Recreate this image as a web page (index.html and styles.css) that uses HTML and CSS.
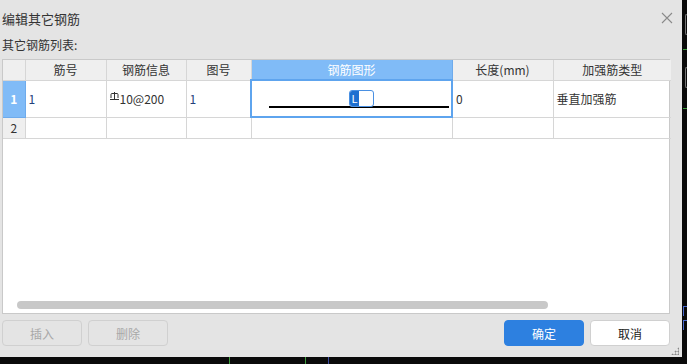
FILE: index.html
```html
<!DOCTYPE html>
<html lang="zh">
<head>
  <meta charset="utf-8" />
  <title>编辑其它钢筋</title>
  <link rel="stylesheet" href="styles.css">
</head>
<body>
  <div class="screen">
    <div class="dialog">
      <div class="title-bar">
        <span class="title">编辑其它钢筋</span>
        <span class="close">
          <svg width="12" height="12" viewBox="0 0 12 12"><path d="M1 1 L11 11 M11 1 L1 11" stroke="#8a8a8a" stroke-width="1.1" fill="none"/></svg>
        </span>
      </div>
      <div class="list-label">其它钢筋列表:</div>

      <div class="grid-box">
        <table class="grid">
          <colgroup>
            <col style="width:22px"><col style="width:81px"><col style="width:80px"><col style="width:65px">
            <col style="width:201px"><col style="width:101px"><col style="width:118px">
          </colgroup>
          <tr class="head">
            <th></th><th>筋号</th><th>钢筋信息</th><th>图号</th><th class="sel-head">钢筋图形</th><th>长度(mm)</th><th>加强筋类型</th>
          </tr>
          <tr class="row1">
            <td class="rh sel-rh">1</td>
            <td class="val">1</td>
            <td>
              <svg class="bar-sym" width="9" height="9" viewBox="0 0 9 9">
                <path d="M1 6 V2.5 Q1 1.5 2 1.5 H7 Q8 1.5 8 2.5 V6 M4.5 0 V7.5 M0 7.5 H9" stroke="#333" stroke-width="1" fill="none"/>
              </svg>10@200
            </td>
            <td class="val">1</td>
            <td class="shape-cell">
              <div class="shape">
                <div class="shape-line"></div>
                <div class="shape-box"><span class="shape-l">L</span></div>
              </div>
            </td>
            <td>0</td>
            <td>垂直加强筋</td>
          </tr>
          <tr class="row2">
            <td class="rh">2</td><td></td><td></td><td></td><td></td><td></td><td></td>
          </tr>
        </table>
        <div class="fill"></div>
        <div class="hscroll"><div class="thumb"></div></div>
      </div>

      <div class="footer">
        <button class="btn" disabled>插入</button>
        <button class="btn" disabled>删除</button>
        <div class="spacer"></div>
        <button class="btn primary">确定</button>
        <button class="btn plain">取消</button>
      </div>
      <div class="grip"></div>
    </div>
    <div class="side">
      <div class="frame f1"></div>
      <div class="frame f2"></div>
      <div class="tick t1"></div>
      <div class="tick t2"></div>
      <div class="mark m1"></div>
      <div class="mark m2"></div>
    </div>
  </div>
  <div class="bottom-strip">
    <div class="vline l1"></div>
    <div class="vline l2"></div>
    <div class="vline l3"></div>
  </div>
</body>
</html>
```

FILE: styles.css
```css
body {
  margin: 0;
  background: #0a0a0a;
  font-family: "Noto Sans CJK SC", "Liberation Sans", sans-serif;
  font-size: 12px;
  color: #333;
  width: 687px;
  height: 364px;
  overflow: hidden;
}

.screen {
  display: flex;
}

.dialog {
  position: relative;
  width: 682px;
  height: 357px;
  background: #e4e4e4;
  box-sizing: border-box;
  padding: 0 12px 0 2px;
  display: flex;
  flex-direction: column;
}

.title-bar {
  height: 36px;
  display: flex;
  align-items: center;
  justify-content: space-between;
}

.title {
  font-size: 13px;
  color: #333;
}

.close {
  display: flex;
  margin-right: -3px;
}

.list-label {
  height: 19px;
  line-height: 19px;
  font-size: 12px;
  color: #333;
  margin-top: -1px;
  margin-bottom: 5px;
}

.grid-box {
  width: 668px;
  height: 255px;
  box-sizing: border-box;
  border: 1px solid #c9c9c9;
  background: #fff;
  display: flex;
  flex-direction: column;
}

.grid {
  border-collapse: collapse;
  table-layout: fixed;
  width: 666px;
}

.grid th, .grid td {
  border: 1px solid #d6d6d6;
  padding: 0;
  white-space: nowrap;
}

.grid tr:first-child th {
  border-top: none;
}

.grid th:first-child, .grid td:first-child {
  border-left: none;
}

.grid th:last-child, .grid td:last-child {
  border-right: none;
}

.head th {
  height: 19px;
  background: #efefef;
  font-weight: normal;
  color: #333;
  text-align: center;
  font-size: 12px;
}

.head th.sel-head {
  background: #80bbf7;
  color: #fff;
  border: 1px solid #6eabec;
}

.row1 td {
  height: 35px;
  padding-left: 3px;
}

.row2 td {
  height: 20px;
}

.grid .rh {
  background: #efefef;
  text-align: center;
  padding-left: 0;
}

.grid .sel-rh {
  background: #80bbf7;
  color: #fff;
  font-weight: bold;
  border-color: #6eabec;
}

.val {
  color: #23407a;
}

.bar-sym {
  vertical-align: 3px;
  margin-right: 1px;
}

.grid td.shape-cell {
  border: 2px solid #5ea4ee;
  padding: 0;
}

.shape {
  position: relative;
  height: 33px;
}

.shape-line {
  position: absolute;
  left: 17px;
  right: 2px;
  top: 24px;
  height: 2px;
  background: #000;
}

.shape-box {
  position: absolute;
  left: 97px;
  top: 8px;
  width: 23px;
  height: 15px;
  border: 1px solid #4a90e2;
  border-radius: 3px;
  background: #fff;
  display: flex;
}

.shape-l {
  background: #1e6fd0;
  color: #fff;
  font-size: 11px;
  line-height: 15px;
  width: 9px;
  text-align: center;
  border-radius: 2px 0 0 2px;
}

.fill {
  flex: 1;
}

.hscroll {
  height: 8px;
  margin: 0 0 4px 14px;
}

.thumb {
  width: 531px;
  height: 8px;
  border-radius: 4px;
  background: #c8c8c8;
}

.footer {
  display: flex;
  gap: 6px;
  margin-top: 6px;
  width: 668px;
}

.spacer {
  flex: 1;
}

.btn {
  width: 80px;
  height: 26px;
  font-family: "Noto Sans CJK SC", sans-serif;
  font-size: 12px;
  border: 1px solid #d0d0d0;
  border-radius: 4px;
  background: #e4e4e4;
  color: #a8a8a8;
  padding: 0;
}

.btn.primary {
  background: #2d80e0;
  border-color: #2d80e0;
  color: #fff;
}

.btn.plain {
  background: #fff;
  color: #222;
}

.grip {
  position: absolute;
  right: 3px;
  bottom: 2px;
  width: 8px;
  height: 8px;
  background:
    radial-gradient(circle, #888 45%, transparent 50%) 0 0 / 3px 3px;
  clip-path: polygon(100% 0, 100% 100%, 0 100%);
}

.side {
  position: relative;
  flex: 1;
  height: 357px;
}

.frame {
  position: absolute;
  left: 3px;
  width: 4px;
  height: 19px;
  border: 1px solid #777;
  border-right: none;
  border-radius: 2px 0 0 2px;
}

.f1 { top: 14px; }
.f2 { top: 67px; }

.tick {
  position: absolute;
  left: 1px;
  width: 4px;
  height: 1px;
  background: #3c9a3c;
}

.t1 { top: 49px; }
.t2 { top: 108px; }

.mark {
  position: absolute;
  left: 1px;
  width: 4px;
  height: 9px;
  border-left: 1px solid #4a6ad0;
  border-top: 1px solid #4a6ad0;
}

.m1 { top: 306px; }
.m2 { top: 320px; }

.bottom-strip {
  position: relative;
  height: 7px;
}

.vline {
  position: absolute;
  top: 0;
  width: 1px;
  height: 7px;
}

.l1 { left: 229px; background: #3c9a3c; }
.l2 { left: 305px; background: #3c9a3c; }
.l3 { left: 328px; background: #3a4aa0; }
```
